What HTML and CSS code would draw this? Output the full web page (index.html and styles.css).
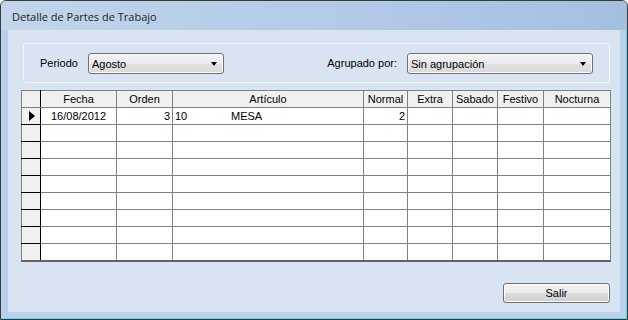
FILE: index.html
```html
<!DOCTYPE html>
<html>
<head>
    <title>Detalle de Partes de Trabajo</title>
    <link rel="stylesheet" href="styles.css">
</head>
<body>
    <div class="window">
        <div class="titlebar">
            <span class="title">Detalle de Partes de Trabajo</span>
        </div>

        <div class="client">
            <div class="filters">
                <div class="field">
                    <label>Periodo</label>
                    <div class="combo period"><span>Agosto</span><i class="arrow"></i></div>
                </div>
                <div class="field">
                    <label>Agrupado por:</label>
                    <div class="combo grouping"><span>Sin agrupación</span><i class="arrow"></i></div>
                </div>
            </div>

            <table class="grid">
                <colgroup>
                    <col style="width: 19px">
                    <col style="width: 76px">
                    <col style="width: 56px">
                    <col style="width: 191px">
                    <col style="width: 44px">
                    <col style="width: 45px">
                    <col style="width: 45px">
                    <col style="width: 46px">
                    <col style="width: 67px">
                </colgroup>
                <thead>
                    <tr>
                        <th class="row-header"></th>
                        <th>Fecha</th>
                        <th>Orden</th>
                        <th>Artículo</th>
                        <th>Normal</th>
                        <th>Extra</th>
                        <th>Sabado</th>
                        <th>Festivo</th>
                        <th>Nocturna</th>
                    </tr>
                </thead>
                <tbody>
                    <tr>
                        <td class="row-header"><i class="current"></i></td>
                        <td class="center">16/08/2012</td>
                        <td class="num">3</td>
                        <td><span class="code">10</span>MESA</td>
                        <td class="num">2</td>
                        <td></td><td></td><td></td><td></td>
                    </tr>
                    <tr><td class="row-header"></td><td></td><td></td><td></td><td></td><td></td><td></td><td></td><td></td></tr>
                    <tr><td class="row-header"></td><td></td><td></td><td></td><td></td><td></td><td></td><td></td><td></td></tr>
                    <tr><td class="row-header"></td><td></td><td></td><td></td><td></td><td></td><td></td><td></td><td></td></tr>
                    <tr><td class="row-header"></td><td></td><td></td><td></td><td></td><td></td><td></td><td></td><td></td></tr>
                    <tr><td class="row-header"></td><td></td><td></td><td></td><td></td><td></td><td></td><td></td><td></td></tr>
                    <tr><td class="row-header"></td><td></td><td></td><td></td><td></td><td></td><td></td><td></td><td></td></tr>
                    <tr><td class="row-header"></td><td></td><td></td><td></td><td></td><td></td><td></td><td></td><td></td></tr>
                    <tr><td class="row-header"></td><td></td><td></td><td></td><td></td><td></td><td></td><td></td><td></td></tr>
                </tbody>
            </table>

            <div class="actions">
                <button class="button">Salir</button>
            </div>
        </div>
    </div>
</body>
</html>
```

FILE: styles.css
```css
body {
    margin: 0;
    font-family: "Liberation Sans", Arial, sans-serif;
    font-size: 11px;
    color: #000;
    background-color: #fff;
}
.window {
    width: 628px;
    height: 320px;
    box-sizing: border-box;
    border: 1px solid #3a3a3a;
    border-radius: 6px 6px 0 0;
    background-color: #b9d1ea;
    padding: 0 7px 7px;
    display: flex;
    flex-direction: column;
    box-shadow: inset -1px -1px 0 #5fd3e8;
}
.titlebar {
    height: 29px;
    margin: 0 -7px;
    padding-left: 11px;
    display: flex;
    align-items: center;
    border-radius: 5px 5px 0 0;
    background: linear-gradient(to right, #c2d5eb, #b0c9e6 60%, #a3bfe0);
}
.title {
    font-family: "Open Sans", "Noto Sans", sans-serif;
    font-size: 11px;
    color: #1e1e1e;
    padding-top: 2px;
}
.client {
    flex: 1;
    background-color: #d8e4f1;
    padding: 13px 10px 9px 13px;
    display: flex;
    flex-direction: column;
}
.filters {
    margin-left: 2px;
    height: 40px;
    box-sizing: border-box;
    border: 1px solid #f3f7fb;
    border-radius: 3px;
    padding: 0 16px;
    display: flex;
    align-items: center;
    justify-content: space-between;
}
.field {
    display: flex;
    align-items: center;
    gap: 10px;
}
.combo {
    height: 21px;
    box-sizing: border-box;
    border: 1px solid #707070;
    border-radius: 3px;
    background: linear-gradient(#f2f2f2, #ebebeb 50%, #e2e2e2 50%, #dadada);
    box-shadow: inset 0 0 0 1px #fafafa;
    display: flex;
    align-items: center;
    justify-content: space-between;
    padding: 1px 6px 0 3px;
}
.combo.period {
    width: 136px;
}
.combo.grouping {
    width: 186px;
}
.arrow {
    width: 0;
    height: 0;
    border-left: 3.5px solid transparent;
    border-right: 3.5px solid transparent;
    border-top: 4px solid #000;
}
.grid {
    margin-top: 7px;
    width: 589px;
    table-layout: fixed;
    border-collapse: collapse;
    background-color: #fff;
    border: 1px solid #646464;
    border-bottom-width: 2px;
}
.grid th,
.grid td {
    height: 16px;
    padding: 0 2px;
    border: 1px solid #808080;
    font-weight: normal;
    white-space: nowrap;
    overflow: hidden;
    line-height: 15px;
}
.grid th {
    background-color: #f0f0f0;
    text-align: center;
}
.grid .row-header {
    background-color: #f0f0f0;
    border-right-color: #000;
    padding: 0;
}
.grid tbody .row-header {
    border-bottom-color: #000;
}
.grid .center {
    text-align: center;
}
.grid .num {
    text-align: right;
}
.code {
    display: inline-block;
    width: 56px;
}
.current {
    display: block;
    width: 0;
    height: 0;
    margin-left: 7px;
    border-top: 5px solid transparent;
    border-bottom: 5px solid transparent;
    border-left: 6px solid #000;
}
.actions {
    margin-top: auto;
    display: flex;
    justify-content: flex-end;
}
.button {
    width: 107px;
    height: 20px;
    padding: 0;
    font-family: inherit;
    font-size: 11px;
    border: 1px solid #707070;
    border-radius: 3px;
    background: linear-gradient(#f2f2f2, #ebebeb 50%, #dddddd 50%, #cfcfcf);
    box-shadow: inset 0 0 0 1px #fcfcfc;
}
```
